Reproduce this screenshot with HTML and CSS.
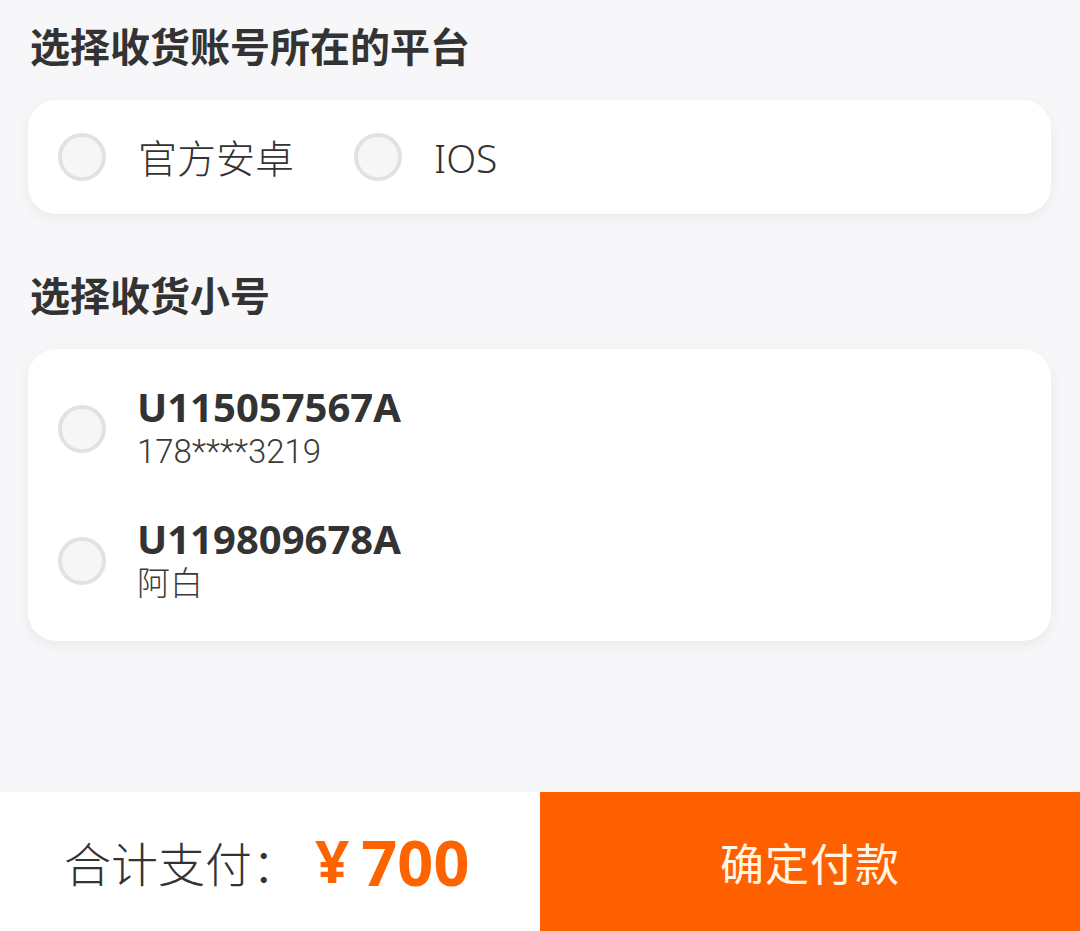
FILE: index.html
```
<!DOCTYPE html>
<html lang="zh-CN">
<head>
  <meta charset="UTF-8" />
  <meta name="viewport" content="width=device-width, initial-scale=1" />
  <title>选择收货账号</title>
  <link rel="stylesheet" href="styles.css">
</head>
<body>

  <div class="page">
    <main class="main">
      <h2 class="section-title">选择收货账号所在的平台</h2>
      <div class="card platform-card">
        <label class="option">
          <span class="radio"></span>
          <span class="option-text">官方安卓</span>
        </label>
        <label class="option">
          <span class="radio"></span>
          <span class="option-text">IOS</span>
        </label>
      </div>

      <h2 class="section-title">选择收货小号</h2>
      <div class="card account-card">
        <div class="account">
          <span class="radio"></span>
          <div class="account-info">
            <div class="account-id">U115057567A</div>
            <div class="account-name">178****3219</div>
          </div>
        </div>
        <div class="account">
          <span class="radio"></span>
          <div class="account-info">
            <div class="account-id">U119809678A</div>
            <div class="account-name">阿白</div>
          </div>
        </div>
      </div>
    </main>

    <footer class="pay-bar">
      <div class="total">
        <span class="total-label">合计支付：</span>
        <span class="total-price"><span class="yen">¥</span>700</span>
      </div>
      <button class="pay-btn">确定付款</button>
    </footer>
  </div>

</body>
</html>
```

FILE: styles.css
```
html, body {
  margin: 0;
  padding: 0;
  height: 100%;
  background: #f7f7f9;
  font-family: "Noto Sans", "Noto Sans CJK SC", sans-serif;
  color: #333;
}

* {
  box-sizing: border-box;
}

.page {
  display: flex;
  flex-direction: column;
  height: 100vh;
}

.main {
  flex: 1;
  padding: 22px 29px 0 28px;
}

.section-title {
  margin: 0 0 0 2px;
  font-size: 40px;
  line-height: 50px;
  font-weight: bold;
  color: #333;
}

.card {
  background: #fff;
  border-radius: 28px;
  box-shadow: 0 4px 14px rgba(0, 0, 0, 0.06);
  margin: 28px 0 57px;
}

.radio {
  flex: none;
  width: 48px;
  height: 48px;
  border: 4px solid #e2e2e2;
  border-radius: 50%;
  background: #f6f6f6;
}

.platform-card {
  display: flex;
  align-items: center;
  height: 114px;
  padding: 0 28px 0 30px;
}

.option {
  display: flex;
  align-items: center;
  gap: 32px;
  margin-right: 60px;
}

.option-text {
  font-size: 39px;
  font-weight: 300;
  line-height: 1;
}

.account-card {
  padding: 36px 28px 36px 30px;
  display: flex;
  flex-direction: column;
  gap: 44px;
}

.account {
  display: flex;
  align-items: center;
  gap: 31px;
}

.account-id {
  font-size: 40px;
  font-weight: bold;
  line-height: 44px;
}

.account-name {
  font-family: Roboto, "Noto Sans CJK SC", sans-serif;
  font-size: 33px;
  font-weight: 300;
  line-height: 42px;
  margin-top: 2px;
  color: #3a3a3a;
}

.pay-bar {
  display: flex;
  height: 139px;
}

.total {
  width: 50%;
  flex: none;
  display: flex;
  align-items: center;
  padding-left: 64px;
  background: #fff;
}

.total-label {
  font-size: 47px;
  font-weight: 300;
  color: #333;
}

.total-price {
  margin-left: 16px;
  font-size: 63px;
  font-weight: bold;
  color: #fd6400;
}

.yen {
  font-size: 60px;
  margin-right: 12px;
  position: relative;
  top: -3px;
}

.pay-btn {
  flex: 1;
  border: none;
  margin: 0;
  background: #fe6000;
  color: #fff6e6;
  font-family: serif;
  font-size: 44px;
  letter-spacing: 1px;
}
```
